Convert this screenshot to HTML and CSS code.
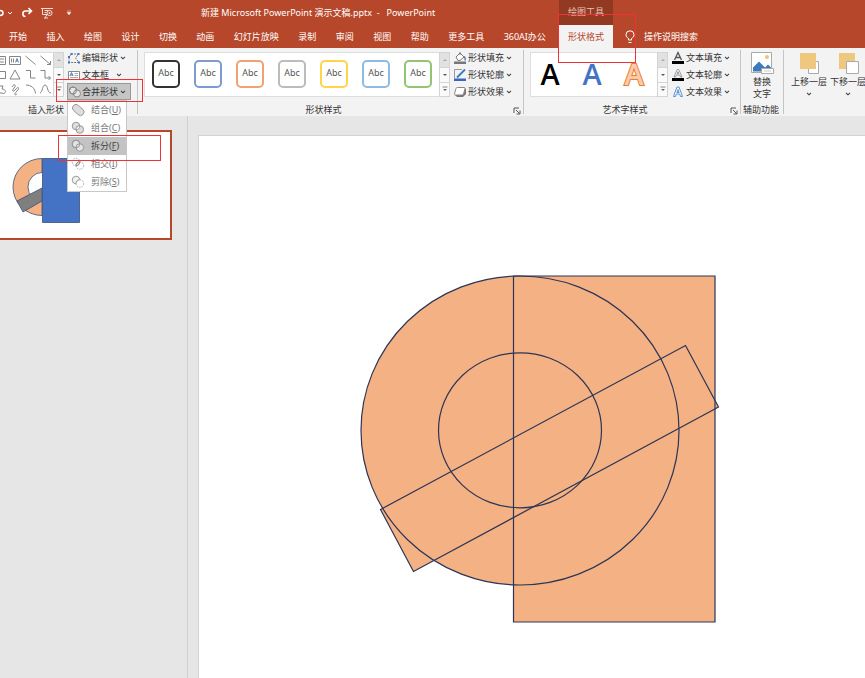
FILE: index.html
```html
<!DOCTYPE html>
<html lang="zh-CN">
<head>
<meta charset="utf-8">
<title>新建 Microsoft PowerPoint 演示文稿.pptx - PowerPoint</title>
<link rel="stylesheet" href="styles.css">
</head>
<body>
<svg class="defs" aria-hidden="true">
  <symbol id="chev" viewBox="0 0 6 4"><path d="M1 .8l2 2 2-2" fill="none" stroke="currentColor" stroke-width="1.1"/></symbol>
  <symbol id="launch" viewBox="0 0 8 8"><path d="M1 6V1h5M3 3l3.500 3.500M7 3.500V7H3.500" fill="none" stroke="#555"/></symbol>
  <symbol id="up" viewBox="0 0 6 4"><path d="M1 3l2-2 2 2z" fill="#aaa"/></symbol>
  <symbol id="down" viewBox="0 0 6 4"><path d="M1 1l2 2 2-2z" fill="#555"/></symbol>
  <symbol id="more" viewBox="0 0 6 6"><path d="M.5 1h5" stroke="#888"/><path d="M1 3l2 2 2-2z" fill="#666"/></symbol>
</svg>

<header class="app-header">
  <div class="title-row">
    <div class="quick">
      <button aria-label="撤消"><svg width="14" height="14" viewBox="0 0 14 14"><path d="M0 4.500c4 0 4 5 0 5" fill="none" stroke="#fff" stroke-width="1.500"/><path d="M8 6l2 2 2-2" fill="none" stroke="#fff"/></svg></button>
      <button aria-label="重复"><svg width="12" height="12" viewBox="0 0 12 12"><path d="M10 4H4.500C1 4 1 9.500 4.500 9.500M7.500 1l3 3-3 3" fill="none" stroke="#fff" stroke-width="1.600"/></svg></button>
      <button aria-label="从头开始放映"><svg width="14" height="12" viewBox="0 0 14 12"><path d="M1 1.500h12M2.500 1.500v6H7M4.500 3.500h4M4.500 5.500h2M5 11l2-3.500M4 11h4" fill="none" stroke="#f3dcd5"/><circle cx="9.500" cy="6" r="2.600" fill="none" stroke="#f3dcd5"/><path d="M8.800 4.800v2.400l2-1.200z" fill="#fff"/></svg></button>
      <button aria-label="自定义快速访问工具栏"><svg width="6" height="6" viewBox="0 0 6 6"><path d="M1 1h4M1.200 2.500h3.600L3 4.800z" fill="#fff" stroke="#fff" stroke-width=".5"/></svg></button>
    </div>
    <h1 class="title">新建 Microsoft PowerPoint 演示文稿.pptx&nbsp; -&nbsp;&nbsp; PowerPoint</h1>
    <div class="context">绘图工具</div>
  </div>
  <nav class="tab-row">
    <div class="tabs">
      <button>开始</button><button>插入</button><button>绘图</button><button>设计</button><button>切换</button><button>动画</button><button>幻灯片放映</button><button>录制</button><button>审阅</button><button>视图</button><button>帮助</button><button>更多工具</button><button>360AI办公</button>
    </div>
    <button class="active-tab">形状格式</button>
    <button class="tell-me"><svg width="10" height="14" viewBox="0 0 10 14"><path d="M3.500 10V8.500C2 7.500 1 6.500 1 4.800a4 4 0 018 0c0 1.700-1 2.700-2.500 3.700V10zM3.500 12.500h3" fill="none" stroke="#fff"/></svg>操作说明搜索</button>
  </nav>
</header>

<main>
<section class="ribbon">
  <div class="group insert">
    <div class="body">
      <div class="shapes">
        <svg width="53" height="45" viewBox="0 0 53 45" fill="none" stroke="#777" stroke-width=".9">
          <path d="M-4 3.500h9.500v8H-4M0 6h4M0 9h4M9.500 3.500h11v8h-11zM11.500 5.500v4M13.500 5.500v4"/><path d="M15.500 9.500l1.500-4 1.500 4M16 8h2" stroke="#3c78c0"/>
          <path d="M25.500 3l10 8.500M40.500 3l10 8.500M50.500 8v3.500H47"/>
          <path d="M-4 18.500h9.500v7H-4M15 17l-5 9h10zM26 17.500h4.500v7.500h5M40.500 17.500h4.500v7.500h5.500M48.500 23l2 2-2 2"/>
          <path d="M-1 33h4l-1 3c5 0 4 6 0 4H-1M12 34c2-4 5-2 2 1-3 4 0 4 2 1s4-1 1 2-3 5 0 3M26 32c5 0 9 3 9.500 8.500M40 40c3-1 2-8 5-8s2 8 6 8"/>
        </svg>
      </div>
      <div class="scroll"><button aria-label="上一行"><svg width="6" height="4"><use href="#up"/></svg></button><button aria-label="下一行"><svg width="6" height="4"><use href="#down"/></svg></button><button aria-label="更多形状"><svg width="6" height="6"><use href="#more"/></svg></button></div>
      <div class="cmds">
        <button><svg width="14" height="12" viewBox="0 0 14 12"><path d="M2 10.500V5l2.500-3h7L8.500 6l3.500 4.500z" fill="none" stroke="#777" stroke-dasharray="2 1"/><path d="M1 9.500h2v2H1zM1 4h2v2H1zM3.500 1h2v2h-2zM10.500 1h2v2h-2zM11 9.500h2v2h-2z" fill="#3c78c0"/></svg>编辑形状<svg class="ch" width="6" height="4"><use href="#chev"/></svg></button>
        <button><svg width="14" height="12" viewBox="0 0 14 12"><path d="M1.500 2.500h11v8h-11z" fill="#fff" stroke="#888"/><path d="M3 7l1.500-3.500L6 7M3.500 6h2" fill="none" stroke="#3c78c0"/><path d="M7.500 4.500h3.500M7.500 6.500h3.500M3 8.500h8" stroke="#aaa"/></svg>文本框<svg class="ch far" width="6" height="4"><use href="#chev"/></svg></button>
        <div class="merge">
          <button class="open" aria-expanded="true"><svg width="14" height="12" viewBox="0 0 14 12"><g fill="#e8e8e8" stroke="#888"><circle cx="5" cy="4.500" r="3.500"/><circle cx="9" cy="7.500" r="3.500"/><circle cx="5" cy="4.500" r="3.500" fill="none"/></g></svg>合并形状<svg class="ch" width="6" height="4"><use href="#chev"/></svg></button>
          <div class="menu" role="menu">
            <button role="menuitem"><svg width="14" height="14" viewBox="0 0 14 14"><path d="M2.500 7.500a3.500 3.500 0 015-5l4.500 4a3.500 3.500 0 01-5 5z" fill="#ddd" stroke="#999"/></svg><span>结合(<u>U</u>)</span></button>
            <button role="menuitem"><svg width="14" height="14" viewBox="0 0 14 14" stroke="#999"><circle cx="5" cy="5" r="3.800" fill="#ddd"/><circle cx="8.800" cy="8.500" r="3.800" fill="#ddd"/><path d="M5 8.800C5 6.500 6.500 4.700 8.800 4.700c.2 2.300-1.500 4.100-3.800 4.100z" fill="#fff"/></svg><span>组合(<u>C</u>)</span></button>
            <button role="menuitem" class="current"><svg width="14" height="14" viewBox="0 0 14 14" stroke="#999"><circle cx="5" cy="5" r="3.800" fill="#e4e4e4"/><circle cx="8.800" cy="8.500" r="3.800" fill="#e4e4e4"/><circle cx="5" cy="5" r="3.800" fill="none"/></svg><span>拆分(<u>F</u>)</span></button>
            <button role="menuitem"><svg width="14" height="14" viewBox="0 0 14 14" stroke="#aaa" fill="none"><circle cx="5" cy="5" r="3.800" stroke-dasharray="1.500 1"/><circle cx="8.800" cy="8.500" r="3.800" stroke-dasharray="1.500 1"/><path d="M5 8.800C5 6.500 6.500 4.700 8.800 4.700c.2 2.300-1.500 4.100-3.800 4.100z" fill="#ddd" stroke="#888"/></svg><span>相交(<u>I</u>)</span></button>
            <button role="menuitem"><svg width="14" height="14" viewBox="0 0 14 14" stroke="#999" fill="none"><circle cx="8.800" cy="8.500" r="3.800" stroke="#aaa" stroke-dasharray="1.500 1"/><path d="M5 8.800A3.800 3.800 0 118.800 4.700C6.500 4.700 5 6.500 5 8.800z" fill="#f2f2f2"/></svg><span>剪除(<u>S</u>)</span></button>
          </div>
        </div>
      </div>
    </div>
    <div class="label">插入形状</div>
  </div>

  <div class="group styles">
    <div class="body">
      <div class="gallery">
        <button class="sw black"><span>Abc</span></button><button class="sw blue"><span>Abc</span></button><button class="sw orange"><span>Abc</span></button><button class="sw gray"><span>Abc</span></button><button class="sw gold"><span>Abc</span></button><button class="sw sky"><span>Abc</span></button><button class="sw green"><span>Abc</span></button>
      </div>
      <div class="scroll"><button aria-label="上一行"><svg width="6" height="4"><use href="#up"/></svg></button><button aria-label="下一行"><svg width="6" height="4"><use href="#down"/></svg></button><button aria-label="更多样式"><svg width="6" height="6"><use href="#more"/></svg></button></div>
      <div class="cmds">
        <button><svg width="14" height="14" viewBox="0 0 14 14"><path d="M3 6l4-4 4 4-4 3.500H5zM7 4V1" fill="#fff" stroke="#777"/><path d="M11 5.500c1.500 1 1.500 2 1 4" fill="none" stroke="#3c78c0" stroke-width="1.300"/><path d="M1 10.500h12v2.500H1z" fill="#777"/></svg>形状填充<svg class="ch" width="6" height="4"><use href="#chev"/></svg></button>
        <button><svg width="14" height="14" viewBox="0 0 14 14"><path d="M9 1.500H1.500v9" fill="none" stroke="#999"/><path d="M4 9.500l8-8" stroke="#3c78c0" stroke-width="1.800"/><path d="M1 10.500h12v2.500H1z" fill="#3566c0"/></svg>形状轮廓<svg class="ch" width="6" height="4"><use href="#chev"/></svg></button>
        <button><svg width="14" height="14" viewBox="0 0 14 14"><path d="M2 10l2 2h6l3-3V4l-2-1z" fill="#777"/><path d="M4.500 2.500h6.500a1 1 0 011 1.200L10.500 9a1.500 1.500 0 01-1.500 1H2.500a1 1 0 01-1-1.200L3 3.500a1.500 1.500 0 011.500-1z" fill="#fff" stroke="#888"/></svg>形状效果<svg class="ch" width="6" height="4"><use href="#chev"/></svg></button>
      </div>
    </div>
    <div class="label">形状样式<button class="launch" aria-label="设置形状格式"><svg width="8" height="8"><use href="#launch"/></svg></button></div>
  </div>

  <div class="group wordart">
    <div class="body">
      <div class="gallery">
        <button class="wa wa-black">A</button><button class="wa wa-blue">A</button><button class="wa wa-orange">A</button>
      </div>
      <div class="scroll"><button aria-label="上一行"><svg width="6" height="4"><use href="#up"/></svg></button><button aria-label="下一行"><svg width="6" height="4"><use href="#down"/></svg></button><button aria-label="更多艺术字"><svg width="6" height="6"><use href="#more"/></svg></button></div>
      <div class="cmds">
        <button><svg width="14" height="14" viewBox="0 0 14 14"><path d="M3.500 9L7 1.500 10.500 9M4.800 6.500h4.400" fill="none" stroke="#555" stroke-width="1.300"/><path d="M1 10h12v3H1z" fill="#000"/></svg>文本填充<svg class="ch" width="6" height="4"><use href="#chev"/></svg></button>
        <button><svg width="14" height="14" viewBox="0 0 14 14"><path d="M3 9L6.200 1.500h1.600L11 9H9.500L8.700 7H5.300L4.500 9zM7 3.500L6 5.800h2z" fill="#fff" stroke="#888" stroke-width=".8"/><path d="M1 10h12v3H1z" fill="#000"/></svg>文本轮廓<svg class="ch" width="6" height="4"><use href="#chev"/></svg></button>
        <button><svg width="14" height="14" viewBox="0 0 14 14"><path d="M2.500 11.500L6 2h2l3.500 9.500H9.500l-.8-2.500H5.300l-.8 2.500zM7 4.500L5.800 7.500h2.400z" fill="#fff" stroke="#5b92d4"/></svg>文本效果<svg class="ch" width="6" height="4"><use href="#chev"/></svg></button>
      </div>
    </div>
    <div class="label">艺术字样式<button class="launch" aria-label="设置文本效果格式"><svg width="8" height="8"><use href="#launch"/></svg></button></div>
  </div>

  <div class="group access">
    <div class="body">
      <button class="big"><svg width="24" height="24" viewBox="0 0 24 24"><path d="M1.500 1.500h20v20h-20z" fill="#fff" stroke="#aaa"/><circle cx="17" cy="6" r="2" fill="#edc27a"/><path d="M3 20.500v-4l6-6 6 6 3-3 3 3v4z" fill="#3f7ab8"/><path d="M11.500 17.500h12v5h-12z" fill="#fff" stroke="#aaa"/><path d="M14 20h7" stroke="#ccc"/></svg><span>替换</span><span>文字</span></button>
    </div>
    <div class="label">辅助功能</div>
  </div>

  <div class="group arrange">
    <div class="body">
      <button class="big"><svg width="24" height="24" viewBox="0 0 24 24"><path d="M11.500 10.500h10v12h-10z" fill="#fff" stroke="#aaa"/><path d="M3 2h16v16H3z" fill="#efc880"/></svg><span>上移一层</span><svg class="ch" width="6" height="4"><use href="#chev"/></svg></button>
      <button class="big"><svg width="24" height="24" viewBox="0 0 24 24"><path d="M3 2h16v16H3z" fill="#efc880"/><path d="M10.500 10.500h12v12h-12z" fill="#fff" stroke="#aaa"/></svg><span>下移一层</span><svg class="ch" width="6" height="4"><use href="#chev"/></svg></button>
    </div>
  </div>
</section>

<section class="work">
  <aside class="pane">
    <div class="thumb">
      <svg width="90" height="80" viewBox="0 0 90 80" stroke="#3b4f78" stroke-width=".8">
        <path d="M42 6.500a29 28.500 0 000 57V49.500a14 14.500 0 010-29z" fill="#f4b183"/>
        <path d="M17 49l25-13v13L23 60z" fill="#7f7f7f"/>
        <path d="M42.500 6.500h37v64h-37z" fill="#4472c4"/>
      </svg>
    </div>
  </aside>
  <div class="slide">
    <svg width="360" height="350" viewBox="360 274 360 350" role="img" aria-label="重叠的形状">
      <g fill="#f4b183"><ellipse cx="520" cy="430.500" rx="159" ry="154.500"/><path d="M513.500 276H715v346H513.500z"/><path d="M685.500 345.500l33 61.500-305 164.500-33-62z"/></g>
      <g fill="none" stroke="#2c3556" stroke-width="1.200"><ellipse cx="520" cy="430.500" rx="159" ry="154.500"/><ellipse cx="520" cy="430.300" rx="81.500" ry="77.500"/><path d="M513.500 276H715v346H513.500z"/><path d="M685.500 345.500l33 61.500-305 164.500-33-62z"/></g>
    </svg>
  </div>
</section>
</main>
<div class="mark mark-tab"></div>
<div class="mark mark-merge"></div>
<div class="mark mark-item"></div>
</body>
</html>
```
FILE: styles.css
```css
* { box-sizing: border-box; }
body {
  margin: 0;
  height: 100vh;
  overflow: hidden;
  display: flex;
  flex-direction: column;
  background: #e6e6e6;
  color: #333;
  font: 9px/12px "Noto Sans", "Noto Sans CJK SC", sans-serif;
}
button {
  margin: 0;
  padding: 0;
  border: 0;
  background: none;
  color: inherit;
  font: inherit;
  white-space: nowrap;
}
svg { display: block; flex: none; }
.defs { position: absolute; width: 0; height: 0; }

/* Header */
.app-header { background: #b7472a; color: #fff; }
.title-row, .tab-row { display: flex; }
.title-row { height: 25px; }
.quick { flex: 0 0 201px; display: flex; align-items: center; gap: 7px; }
.quick button:nth-child(4) { margin-left: 5px; }
.title { flex: 0 0 358px; margin: 0; font-size: 9px; font-weight: 400; line-height: 25px; white-space: nowrap; }
.context { width: 54px; background: #923922; color: #e6c3b9; text-align: center; line-height: 24px; }
.tab-row { height: 23px; }
.tabs { flex: 0 0 559px; padding: 0 13px 0 9px; display: flex; justify-content: space-between; }
.active-tab { width: 54px; background: #f3f3f3; color: #b7472a; }
.tell-me { display: flex; align-items: center; gap: 9px; margin-left: 12px; }

/* Ribbon */
main { flex: 1; display: flex; flex-direction: column; min-height: 0; }
.ribbon { display: flex; height: 68px; padding-top: 2px; background: #f3f3f3; }
.group { flex: none; display: flex; flex-direction: column; border-right: 1px solid #c4c4c4; margin-bottom: 2px; }
.body { display: flex; height: 50px; }
.label { position: relative; height: 14px; line-height: 20px; text-align: center; }
.launch { position: absolute; right: 2px; top: 7px; }
.insert { width: 138px; }
.insert .label { text-align: left; padding-left: 28px; }
.styles { width: 386px; padding-left: 6px; }
.wordart { width: 217px; padding-left: 6px; }
.styles .label, .wordart .label { padding-right: 20px; }
.access { width: 43px; }
.access .label { padding-right: 2px; }
.arrange { border: 0; padding-left: 7px; }
.shapes, .gallery { height: 45px; margin-top: 2px; background: #fff; border: solid #ddd; border-width: 1px 0; }
.shapes { width: 53px; }
.gallery { display: flex; align-items: center; border-left-width: 1px; }
.styles .gallery { width: 295px; padding-left: 7px; gap: 14px; }
.wordart .gallery { width: 127px; padding-left: 5px; gap: 14px; }
.scroll { width: 11px; height: 45px; margin-top: 2px; display: grid; grid-template-rows: repeat(3, 1fr); border: 1px solid #d4d4d4; }
.scroll button { display: grid; place-items: center; background: #fafafa; }
.scroll button:first-child { background: #e1e1e1; }
.scroll button + button { border-top: 1px solid #d4d4d4; }
.styles .gallery, .wordart .gallery { padding-bottom: 2px; }
.sw { width: 28px; height: 28px; padding-bottom: 2px; border: 2px solid; border-radius: 5px; background: #fff; }
.sw span { color: #555; }
.black { border-color: #333; }
.blue { border-color: #7b9ad6; }
.orange { border-color: #f2a272; }
.gray { border-color: #bcbcbc; }
.gold { border-color: #ffd54c; }
.sky { border-color: #8dbbe4; }
.green { border-color: #93c474; }
.wa { width: 28px; font: 600 29px/40px "Open Sans", sans-serif; }
.wa-black { color: #000; }
.wa-blue { color: #4472c4; }
.wa-orange { color: #f8cbad; -webkit-text-stroke: 2px #ed7d31; paint-order: stroke fill; }
.cmds { display: flex; flex-direction: column; padding-left: 3px; }
.cmds button { display: flex; align-items: center; height: 17px; }
.cmds > button > svg:first-child { margin-right: 1px; }
.ch { margin-left: 2px; color: #444; }
.far { margin-left: 7px; }
.merge { position: relative; }
.cmds .open { width: 64px; background: #c5c5c5; border: 1px solid #999; }
.big { display: flex; flex-direction: column; align-items: center; }
.big > svg:first-child { margin: 1px 0; }
.big span { line-height: 12px; }
.big .ch { margin: 4px 0 0; }
.access .big { width: 42px; }
.arrange .body { gap: 3px; }

/* Merge shapes menu */
.menu { position: absolute; z-index: 2; top: 17px; left: 0; width: 60px; background: #fff; border: 1px solid #c8c8c8; color: #777; }
.cmds .menu button { width: 100%; height: 18px; padding-left: 3px; gap: 6px; }
.cmds .menu .current { background: #c3c3c3; color: #444; }

/* Workspace */
.work { flex: 1; display: flex; min-height: 0; }
.pane { flex: 0 0 188px; padding-top: 14px; border-right: 1px solid #d0d0d0; }
.thumb { width: 172px; height: 110px; padding-top: 20px; background: #fff; border: 2px solid #b7472a; border-left: 0; }
.slide { flex: 1; margin: 19px 0 0 10px; padding: 138px 0 0 161px; background: #fff; border: solid #d4d4d4; border-width: 1px 0 0 1px; overflow: hidden; }

/* Red callout frames laid over the window */
.mark { position: absolute; z-index: 3; border: 1px solid #ee3338; pointer-events: none; }
.mark-tab { left: 558px; top: 14px; width: 78px; height: 49px; }
.mark-merge { left: 56px; top: 79px; width: 87px; height: 23px; }
.mark-item { left: 58px; top: 135px; width: 103px; height: 26px; }
```
